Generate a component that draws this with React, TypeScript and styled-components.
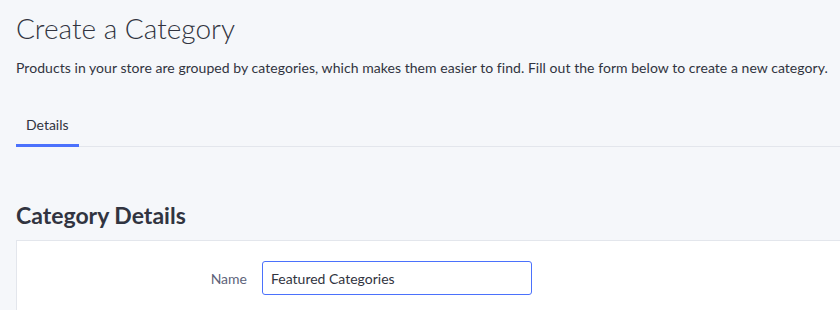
import styled, { createGlobalStyle } from "styled-components";

const GlobalStyle = createGlobalStyle`
    body {
        margin: 0;
        background: #f5f7fa;
        font-family: Lato, "Liberation Sans", sans-serif;
        color: #313440;
    }
`;

const Page = styled.div`
    padding: 0 0 0 16px;
    overflow: hidden;
`;

const Title = styled.h1`
    font-size: 28px;
    font-weight: 300;
    line-height: 36px;
    margin: 10px 0 0;
`;

const Intro = styled.p`
    font-size: 14px;
    letter-spacing: 0.05px;
    line-height: 20px;
    margin: 12px 0 0;
    white-space: nowrap;
`;

const Tabs = styled.div`
    display: flex;
    margin-top: 29px;
    border-bottom: 1px solid #e3e6ec;
`;

const Tab = styled.div<{ $active?: boolean }>`
    padding: 0 10px;
    height: 40px;
    line-height: 36px;
    font-size: 14px;
    box-sizing: border-box;
    border-bottom: 3px solid ${(p) => (p.$active ? "#4b71fc" : "transparent")};
    margin-bottom: -1px;
`;

const SectionTitle = styled.h2`
    font-size: 23px;
    font-weight: 700;
    line-height: 28px;
    margin: 54px 0 0;
`;

const Card = styled.div`
    margin-top: 11px;
    background: #fff;
    border: 1px solid #e3e6ec;
    border-right: none;
    padding: 20px 0 20px;
`;

const Row = styled.div`
    display: grid;
    grid-template-columns: 230px 270px;
    column-gap: 15px;
    align-items: center;
`;

const Label = styled.label`
    text-align: right;
    font-size: 14px;
    color: #5e637a;
`;

const Input = styled.input`
    box-sizing: border-box;
    height: 34px;
    width: 270px;
    padding: 0 8px;
    border: 1px solid #4b71fc;
    border-radius: 3px;
    font-family: inherit;
    font-size: 14px;
    color: #313440;
    background: #fff;
    outline: none;
`;

export default function App() {
    return (
        <Page>
            <GlobalStyle />
            <Title>Create a Category</Title>
            <Intro>
                Products in your store are grouped by categories, which makes them easier to find. Fill out the form below to create a new category.
            </Intro>
            <Tabs>
                <Tab $active>Details</Tab>
            </Tabs>
            <SectionTitle>Category Details</SectionTitle>
            <Card>
                <Row>
                    <Label htmlFor="name">Name</Label>
                    <Input id="name" defaultValue="Featured Categories" />
                </Row>
            </Card>
        </Page>
    );
}
